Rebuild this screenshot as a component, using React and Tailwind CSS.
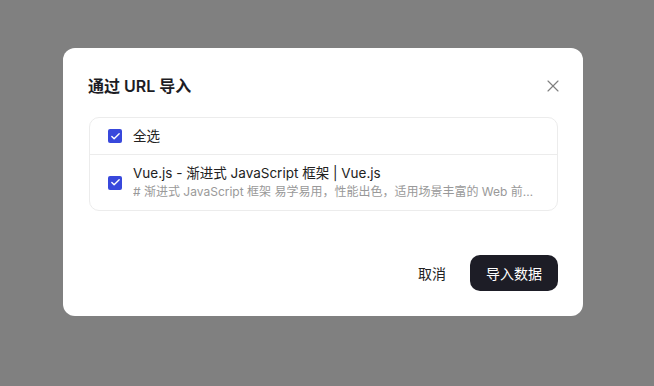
import { X, Check } from 'lucide-react';

const font = { fontFamily: 'Inter, "Noto Sans CJK SC", sans-serif' };

function Box() {
  return (
    <span className="flex h-[14px] w-[14px] shrink-0 items-center justify-center rounded-[2px] bg-[#3848dc]">
      <Check size={11} strokeWidth={3} className="text-white" />
    </span>
  );
}

export default function App() {
  return (
    <div className="flex h-[386px] w-[654px] items-start bg-[#808080] pl-[63px] pt-[48px]" style={font}>
      <div className="w-[520px] rounded-[12px] bg-white px-[25px] pb-[25px] pt-[26px]">
        <div className="flex items-center justify-between">
          <h2 className="text-[16px] font-semibold leading-[24px] text-[#1c1c24]">通过 URL 导入</h2>
          <button className="mr-[-5px] text-[#808080]"><X size={20} strokeWidth={1.4} /></button>
        </div>
        <div className="ml-[1px] mt-[19px] rounded-[10px] border border-[#ececec]">
          <div className="flex h-[37px] items-center gap-[11px] border-b border-[#ececec] pl-[18px]">
            <Box />
            <span className="text-[13.5px] text-[#222]">全选</span>
          </div>
          <div className="flex h-[55px] items-center gap-[11px] pl-[18px] pr-[12px]">
            <Box />
            <div className="min-w-0 pb-[2px]">
              <div className="text-[13.5px] leading-[19px] text-[#222]">Vue.js - 渐进式 JavaScript 框架 | Vue.js</div>
              <div className="truncate text-[12px] leading-[17px] text-[#999]">
                # 渐进式 JavaScript 框架 易学易用，性能出色，适用场景丰富的 Web 前端框架。
              </div>
            </div>
          </div>
        </div>
        <div className="mt-[44px] flex items-center justify-end gap-[24px]">
          <button className="text-[14px] text-[#222]">取消</button>
          <button className="h-[36px] w-[88px] rounded-[10px] bg-[#1d1d26] text-[14px] text-white">导入数据</button>
        </div>
      </div>
    </div>
  );
}
